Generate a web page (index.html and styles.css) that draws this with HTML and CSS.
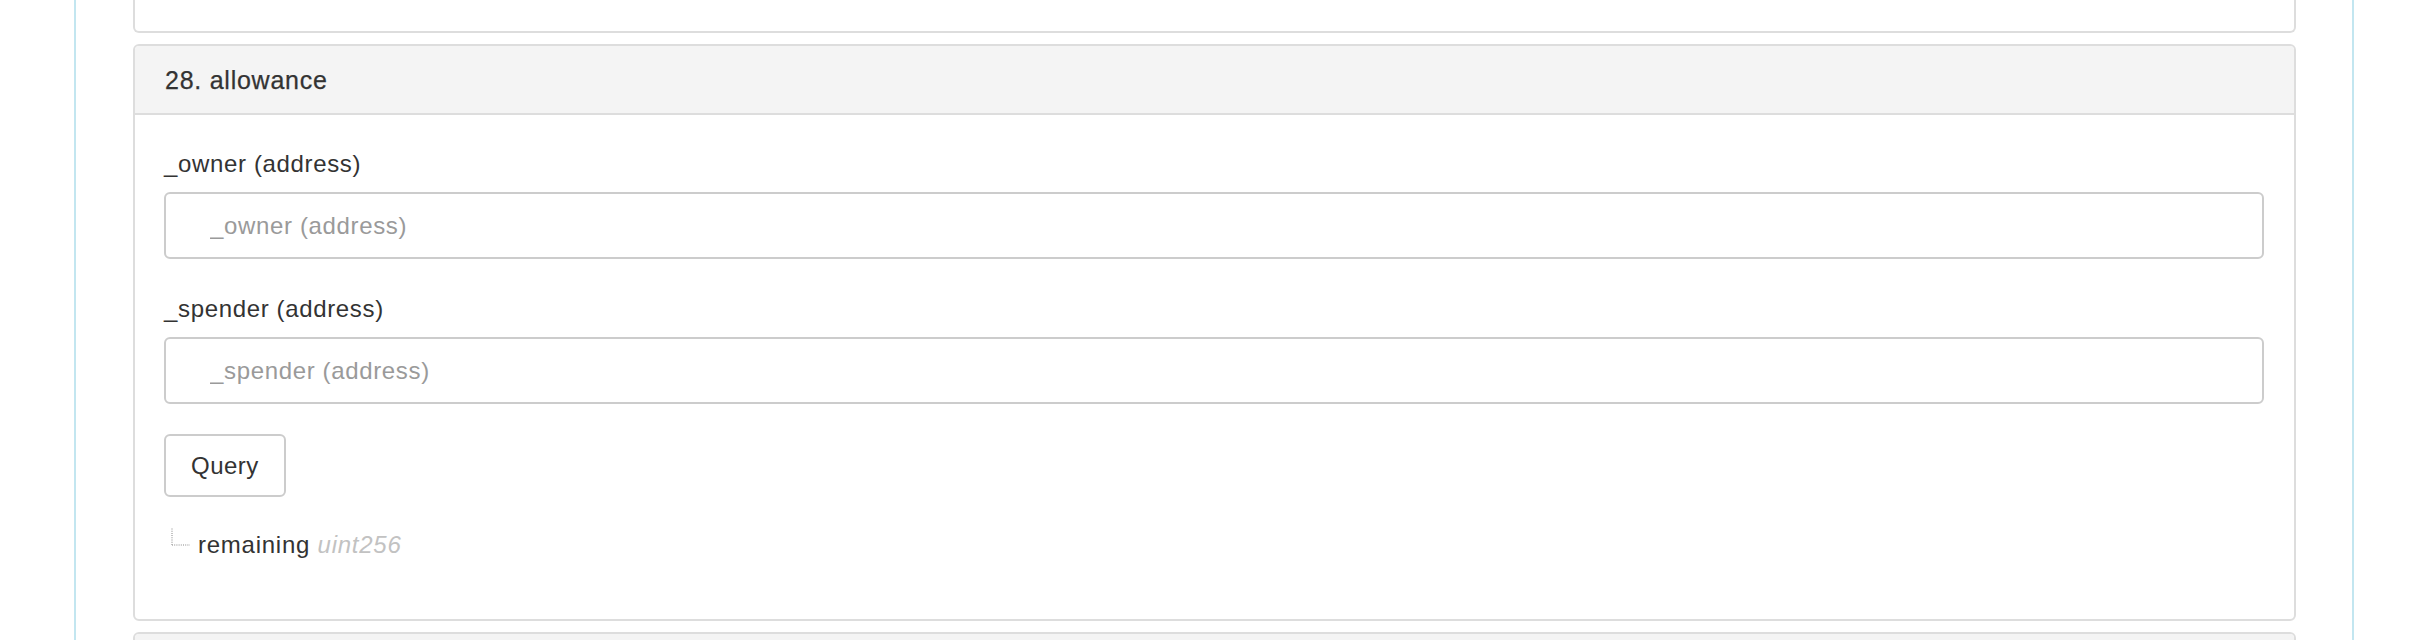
FILE: index.html
```html
<!DOCTYPE html>
<html>
<head>
<meta charset="utf-8">
<title>Contract</title>
<link rel="stylesheet" href="styles.css">
</head>
<body>
<div class="container">
  <div class="panel panel-prev"></div>
  <div class="panel">
    <div class="panel-heading">28. allowance</div>
    <div class="panel-body">
      <div class="form-group">
        <label class="field-label">_owner (address)</label>
        <input class="field-input" type="text" placeholder="_owner (address)">
      </div>
      <div class="form-group">
        <label class="field-label">_spender (address)</label>
        <input class="field-input" type="text" placeholder="_spender (address)">
      </div>
      <button class="btn" type="button">Query</button>
      <div class="output">
        <svg class="tree" width="20" height="18" viewBox="0 0 20 18">
          <line x1="1" y1="0.5" x2="1" y2="17" stroke="#b0b0b0" stroke-width="1.5" stroke-dasharray="1 1.2"/>
          <line x1="1" y1="17" x2="19" y2="17" stroke="#b0b0b0" stroke-width="1.5" stroke-dasharray="1 1.2"/>
        </svg>
        <span class="out-text">remaining <em class="out-type">uint256</em></span>
      </div>
    </div>
  </div>
  <div class="panel">
    <div class="panel-heading panel-heading-empty"></div>
    <div class="panel-body"></div>
  </div>
</div>
</body>
</html>
```
FILE: styles.css
```css
html, body {
  margin: 0;
  padding: 0;
  background: #ffffff;
}

body {
  font-family: "Liberation Sans", Arial, sans-serif;
  color: #333333;
  overflow: hidden;
}

.container {
  margin-left: 74px;
  width: 2280px;
  min-height: 100vh;
  box-sizing: border-box;
  border-left: 2px solid #c3e6f0;
  border-right: 2px solid #c3e6f0;
  padding: 0 56px 0 57px;
}

.panel {
  border: 2px solid #dddddd;
  border-radius: 6px;
  background: #ffffff;
  margin-top: 11px;
}

.panel-prev {
  margin-top: 0;
  height: 31px;
  border-top: none;
  border-radius: 0 0 6px 6px;
}

.panel-heading {
  background: #f4f4f4;
  border-bottom: 2px solid #dddddd;
  border-radius: 4px 4px 0 0;
  padding: 20px 30px 19px;
  font-size: 25px;
  letter-spacing: 0.75px;
  line-height: 28px;
  color: #333333;
  -webkit-text-stroke: 0.25px #333333;
}

.panel-heading-empty {
  min-height: 28px;
}

.panel-body {
  padding: 32px 30px 57px 29px;
}

.form-group {
  margin-bottom: 33px;
}

.field-label {
  display: block;
  font-size: 24px;
  letter-spacing: 0.65px;
  line-height: 34px;
  margin-bottom: 11px;
  color: #333333;
}

.field-input {
  display: block;
  width: 100%;
  height: 67px;
  box-sizing: border-box;
  border: 2px solid #cccccc;
  border-radius: 6px;
  padding: 0 20px 0 44px;
  font-family: "Liberation Sans", Arial, sans-serif;
  font-size: 24px;
  letter-spacing: 0.65px;
  color: #555555;
  background: #ffffff;
  outline: none;
}

.field-input::placeholder {
  color: #9a9a9a;
}

.btn {
  display: block;
  margin-top: -3px;
  height: 63px;
  padding: 0 25px;
  border: 2px solid #cccccc;
  border-radius: 6px;
  background: #ffffff;
  font-family: "Liberation Sans", Arial, sans-serif;
  font-size: 24px;
  letter-spacing: 0.5px;
  color: #333333;
}

.output {
  display: flex;
  align-items: flex-start;
  margin-top: 31px;
  line-height: 34px;
  font-size: 24px;
  letter-spacing: 0.75px;
}

.tree {
  margin-left: 7px;
  margin-right: 7px;
  flex: none;
}

.out-text {
  color: #333333;
}

.out-type {
  color: #c2c2c2;
  font-style: italic;
}
```
